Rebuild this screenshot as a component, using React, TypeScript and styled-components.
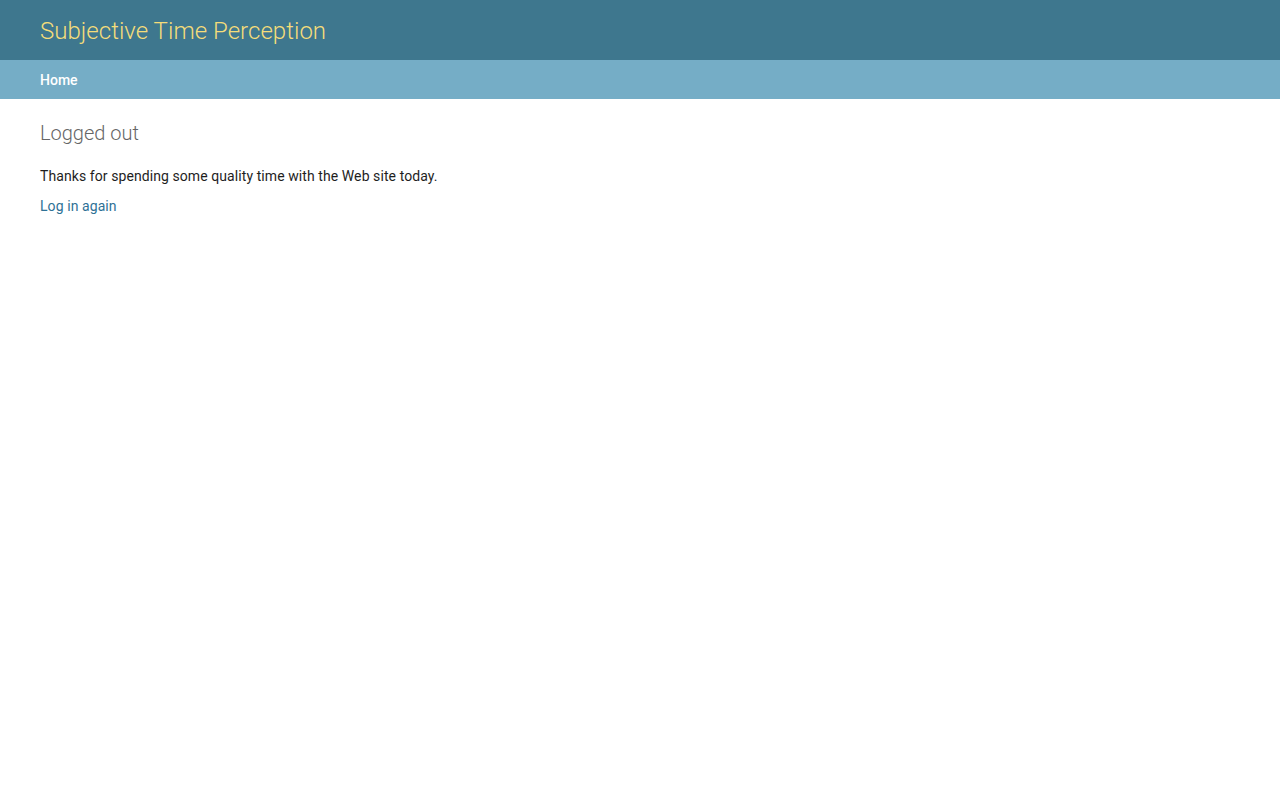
import React from "react";
import styled, { createGlobalStyle } from "styled-components";

const Global = createGlobalStyle`
  html, body { margin: 0; padding: 0; background: #fff; }
  body {
    font-family: Roboto, "Liberation Sans", Arial, sans-serif;
    font-size: 14px;
    color: #333;
  }
`;

const Header = styled.header`
  height: 60px;
  padding: 0 40px;
  background: #3e778e;
  display: flex;
  align-items: center;
`;

const Branding = styled.h1`
  margin: 2px 0 0;
  font-size: 24px;
  font-weight: 300;
  line-height: 40px;
  letter-spacing: 0.03px;
  color: #f5dd7a;
`;

const Breadcrumbs = styled.nav`
  height: 39px;
  padding: 0 40px;
  background: #75adc6;
  display: flex;
  align-items: center;
`;

const Crumb = styled.a`
  color: #fff;
  font-size: 14px;
  font-weight: 500;
  text-decoration: none;
`;

const Content = styled.main`
  padding: 20px 40px;
`;

const Title = styled.h2`
  margin: 0 0 19px;
  font-size: 20px;
  font-weight: 300;
  line-height: 28px;
  color: #666;
`;

const Para = styled.p`
  margin: 0 0 10px;
  font-size: 14px;
  line-height: 20px;
  letter-spacing: 0.08px;
  color: #1e1e1e;
`;

const Link = styled.a`
  color: #2e7196;
  text-decoration: none;
`;

export default function App() {
  return (
    <>
      <Global />
      <Header>
        <Branding>Subjective Time Perception</Branding>
      </Header>
      <Breadcrumbs>
        <Crumb href="#">Home</Crumb>
      </Breadcrumbs>
      <Content>
        <Title>Logged out</Title>
        <Para>Thanks for spending some quality time with the Web site today.</Para>
        <Para>
          <Link href="#">Log in again</Link>
        </Para>
      </Content>
    </>
  );
}
